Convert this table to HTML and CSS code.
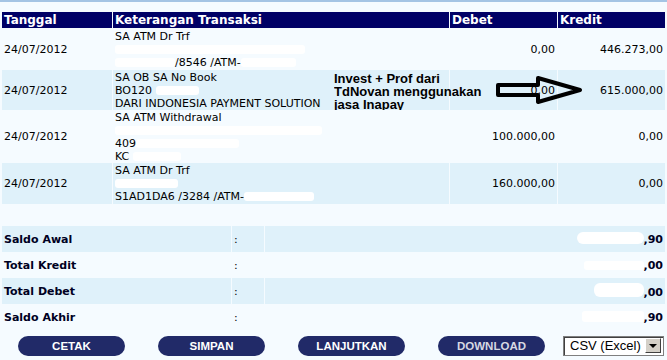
FILE: index.html
```html
<!DOCTYPE html>
<html lang="id">
<head>
<meta charset="utf-8">
<title>Mutasi Rekening</title>
<link rel="stylesheet" href="styles.css">
</head>
<body>
<div class="page">
  <div class="report">
    <table class="tx">
      <thead>
        <tr>
          <th class="c-date">Tanggal</th>
          <th class="c-desc">Keterangan Transaksi</th>
          <th class="c-num">Debet</th>
          <th class="c-num">Kredit</th>
        </tr>
      </thead>
      <tbody>
        <tr class="pale h42">
          <td>24/07/2012</td>
          <td class="desc">SA ATM Dr Trf<br><span class="rd w190"></span><br><span class="rd w60"></span>/8546 /ATM-<span class="rd w55"></span></td>
          <td class="num">0,00</td>
          <td class="num">446.273,00</td>
        </tr>
        <tr class="blue h40">
          <td>24/07/2012</td>
          <td class="desc">SA OB SA No Book<br>BO120 <span class="rd w43"></span><br>DARI INDONESIA PAYMENT SOLUTION</td>
          <td class="num">0,00</td>
          <td class="num">615.000,00</td>
        </tr>
        <tr class="pale h53">
          <td>24/07/2012</td>
          <td class="desc">SA ATM Withdrawal<br><span class="rd w207"></span><br>409<span class="rd w103"></span><br>KC <span class="rd w48"></span></td>
          <td class="num">100.000,00</td>
          <td class="num">0,00</td>
        </tr>
        <tr class="blue h41">
          <td>24/07/2012</td>
          <td class="desc">SA ATM Dr Trf<br><span class="rd w63"></span><br>S1AD1DA6 /3284 /ATM-<span class="rd w70"></span></td>
          <td class="num">160.000,00</td>
          <td class="num">0,00</td>
        </tr>
      </tbody>
    </table>

    <div class="note">
      <p class="note-text">Invest + Prof dari TdNovan menggunakan jasa Inapay</p>
      <svg class="arrow" width="92" height="30" viewBox="0 0 92 30">
        <polygon points="4,9 44,9 44,2 86,14 44,26 44,19 4,19" fill="none" stroke="#000" stroke-width="4" stroke-linejoin="round"/>
      </svg>
    </div>

    <table class="sum">
      <tbody>
        <tr class="blue">
          <th class="s-label">Saldo Awal</th>
          <td class="s-colon">:</td>
          <td class="s-val"><span class="rd w67"></span>,90</td>
        </tr>
        <tr class="pale">
          <th class="s-label">Total Kredit</th>
          <td class="s-colon">:</td>
          <td class="s-val"><span class="rd w60"></span>,00</td>
        </tr>
        <tr class="blue">
          <th class="s-label">Total Debet</th>
          <td class="s-colon">:</td>
          <td class="s-val"><span class="rd w50"></span>,00</td>
        </tr>
        <tr class="pale">
          <th class="s-label">Saldo Akhir</th>
          <td class="s-colon">:</td>
          <td class="s-val"><span class="rd w62"></span>,90</td>
        </tr>
      </tbody>
    </table>

    <div class="actions">
      <button class="btn" type="button">CETAK</button>
      <button class="btn" type="button">SIMPAN</button>
      <button class="btn" type="button">LANJUTKAN</button>
      <button class="btn btn-dim" type="button">DOWNLOAD</button>
      <div class="select">
        <span class="select-text">CSV (Excel)</span>
        <span class="select-btn"><span class="tri"></span></span>
      </div>
    </div>
  </div>
</div>
</body>
</html>
```

FILE: styles.css
```css
html, body {
  margin: 0;
  padding: 0;
  background: #f5fbff;
}

.page {
  width: 667px;
  height: 360px;
  overflow: hidden;
  border-top: 2px solid #a4c4e4;
  box-sizing: border-box;
  padding-top: 10px;
  font-family: "DejaVu Sans", Verdana, sans-serif;
  font-size: 11px;
  color: #000;
}

.report {
  position: relative;
}

table {
  border-collapse: separate;
  border-spacing: 1px 0;
  table-layout: fixed;
  width: 665px;
  margin-left: 1px;
}

th, td {
  padding: 0;
}

.tx th {
  background: #000066;
  color: #fff;
  font-weight: bold;
  font-size: 12px;
  text-align: left;
  height: 16px;
  line-height: 16px;
  padding-left: 2px;
  white-space: nowrap;
}

.c-date { width: 108px; }
.c-desc { width: 334px; }
.c-num { width: 105px; }

.tx td {
  line-height: 13px;
  vertical-align: middle;
  padding: 0 2px;
  white-space: nowrap;
}

.tx td.num {
  text-align: right;
}

.pale td, .pale th { background: #f5fbff; }
.blue td, .blue th { background: #dff1fa; }

.h42 td { height: 42px; }
.h40 td { height: 40px; }
.h53 td { height: 53px; }
.h41 td { height: 41px; }

.rd {
  display: inline-block;
  height: 9px;
  background: #fff;
  border-radius: 3px;
  vertical-align: -1px;
}
.w190 { width: 190px; }
.w60 { width: 60px; }
.w55 { width: 55px; }
.w43 { width: 43px; }
.w207 { width: 207px; }
.w103 { width: 103px; }
.w48 { width: 48px; }
.w63 { width: 63px; }
.w70 { width: 70px; }
.w67 { width: 67px; height: 12px; border-radius: 6px; }
.w50 { width: 50px; height: 14px; border-radius: 6px; }
.w62 { width: 62px; height: 11px; }

.note {
  position: absolute;
  left: 334px;
  top: 58px;
  width: 260px;
  height: 40px;
  overflow: hidden;
}

.note-text {
  margin: 0;
  padding-top: 2px;
  width: 152px;
  font-family: "Liberation Sans", Arial, sans-serif;
  font-weight: bold;
  font-size: 13px;
  line-height: 13px;
  color: #000;
}

.arrow {
  position: absolute;
  left: 160px;
  top: 6px;
}

.sum {
  margin-top: 22px;
}

.sum tr { height: 26px; }

.s-label {
  width: 227px;
  text-align: left;
  font-weight: bold;
  color: #000022;
  padding-left: 2px;
}

.s-colon {
  width: 30px;
  padding-left: 2px;
}

.s-val {
  width: 398px;
  text-align: right;
  font-weight: bold;
  color: #000022;
  padding-right: 2px;
}

.actions {
  display: flex;
  align-items: center;
  gap: 33px;
  padding-left: 18px;
  margin-top: 5px;
  height: 21px;
}

.btn {
  width: 107px;
  height: 20px;
  border: none;
  border-radius: 10px;
  background: #212a68;
  color: #fff;
  font-family: "Liberation Sans", Arial, sans-serif;
  font-weight: bold;
  font-size: 11.5px;
  padding: 0;
  cursor: pointer;
}

.btn-dim {
  color: #d6d8e2;
}

.select {
  margin-left: -15px;
  width: 101px;
  height: 20px;
  box-sizing: border-box;
  background: #fff;
  border: 1px solid #7f7f7f;
  box-shadow: inset 1px 1px 0 #404040;
  display: flex;
  align-items: center;
  justify-content: space-between;
  padding: 0 2px 0 6px;
  font-family: "Liberation Sans", Arial, sans-serif;
  font-size: 13px;
  color: #000;
}

.select-btn {
  width: 16px;
  height: 15px;
  box-sizing: border-box;
  background: #d4d0c8;
  border: 1px solid;
  border-color: #fff #404040 #404040 #fff;
  display: flex;
  align-items: center;
  justify-content: center;
}

.tri {
  width: 0;
  height: 0;
  border-left: 4px solid transparent;
  border-right: 4px solid transparent;
  border-top: 4px solid #000;
}
```
